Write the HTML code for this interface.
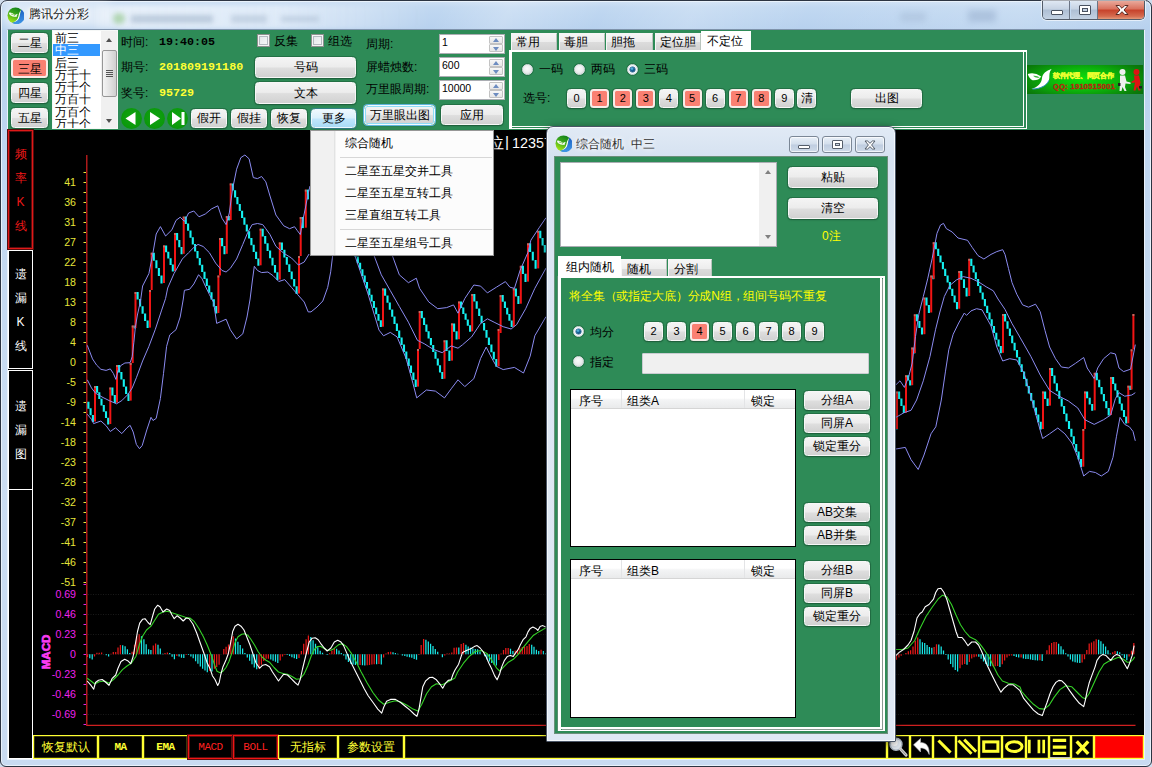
<!DOCTYPE html>
<html lang="zh"><head><meta charset="utf-8"><title>腾讯分分彩</title><style>
*{box-sizing:border-box;margin:0;padding:0}
html,body{width:1152px;height:767px;overflow:hidden;background:#cfdcec}
body{font-family:"Liberation Sans",sans-serif;font-size:12px;color:#000;position:relative;line-height:1}
.abs,.b,.t,.g{position:absolute}
.t{white-space:nowrap;font-size:12px;line-height:14px}
.b{border:1px solid #f7f7f7;border-radius:3.5px;background:linear-gradient(#f4f4f4 0%,#ececec 47%,#dedede 53%,#d1d1d1 100%);box-shadow:0 0 0 1px rgba(20,75,45,.4),0 1px 2px rgba(0,0,0,.25);text-align:center;font-size:12px;white-space:nowrap;overflow:hidden}
.b.red{background:#fa8072;border:2px solid #f8ece8;color:#000}
.b.hot{border-color:#eef8fe;background:linear-gradient(#eef8fe 0%,#daf0fc 47%,#c0e6fc 53%,#a9dbf6 100%);box-shadow:0 0 0 1px rgba(60,127,177,.55),0 1px 2px rgba(0,0,0,.25)}
.b.def{border-color:#f0fbff;box-shadow:inset 0 0 0 1px #8fdcf6,0 0 0 1px #5fb4dc,0 1px 2px rgba(0,0,0,.25)}
.nb{font-size:11px}
.sp{position:absolute;background:#fff;border:1px solid #abadb3;font-size:12px}
.sp i{position:absolute;right:1px;width:14px;height:8px;background:linear-gradient(#f8f8f8,#e6e6e6);border:1px solid #c3c3c3;border-radius:1px}
.sp i:after{content:"";position:absolute;left:3px;top:1px;border:3px solid transparent}
.sp i.u:after{border-bottom:4px solid #6d8cc0;border-top:0;top:1px}
.sp i.d:after{border-top:4px solid #6d8cc0;border-bottom:0;top:2px}
.cb{position:absolute;width:13px;height:13px;border:1px solid #8e8f8f;background:linear-gradient(135deg,#dfe3e6,#fafbfb);box-shadow:inset 0 0 0 1px #f4f4f4, inset 0 0 0 2px #b4b9bf}
.rd{position:absolute;width:11px;height:11px;border-radius:50%;border:1px solid #d9dcdf;background:radial-gradient(circle at 45% 40%,#fbfbfb 0%,#eceeef 50%,#c9cdd1 100%);box-shadow:0 0 0 1px rgba(20,75,45,.35)}
.rd.on{background:radial-gradient(circle at 50% 50%,#fff 0%,#f4f8fb 60%,#d8e4ec 100%)}
.rd.on:after{content:"";position:absolute;left:2px;top:2px;width:5px;height:5px;border-radius:50%;background:radial-gradient(circle at 40% 35%,#6fd4f4 0%,#16659c 40%,#0a3560 100%);box-shadow:0 0 0 .5px #1a5a8c}
.tab{position:absolute;border:1px solid #f6f6f6;border-right-color:#b9c4bd;border-bottom:none;background:linear-gradient(#f6f6f6 0%,#ededed 50%,#dcdcdc 52%,#d2d2d2 100%);font-size:12px;padding-left:5px;white-space:nowrap}
.tab.sel{background:#fff;border-color:#fff}
.y{color:#ffff00}
.wbtn{position:absolute;border:1px solid #fff;color:#fff;text-align:center;font-size:12px}
.ybtn{position:absolute;border:1px solid #ffff33;color:#ffff33;text-align:center;font-size:12px;line-height:22px;height:24px;top:735px;white-space:nowrap;box-shadow:inset 0 0 0 .5px rgba(255,255,51,.45)}
.ybtn.r{border-color:#f01414;color:#ff2020;box-shadow:0 0 0 1px #5a0c0c,inset 0 0 0 1px #5a0c0c;font-weight:normal}
.mono{font-family:"Liberation Mono",monospace;font-weight:bold;font-size:11px;letter-spacing:-.5px}
</style></head><body>
<div class="abs" style="left:0;top:0;width:1152px;height:767px;border-radius:7px 7px 6px 6px;background:linear-gradient(180deg,#cfe0f4 0px,#c1d8f1 6px,#b7d1ee 29px,#bfd6f0 140px,#cbddf2 450px,#c9dbf1 767px);border:1px solid #2c3442;box-shadow:inset 0 0 0 1px #e9f2fb"></div>
<div class="abs" style="left:2px;top:2px;width:1148px;height:27px;background:linear-gradient(115deg,rgba(255,255,255,0) 0%,rgba(255,255,255,0) 38%,rgba(255,255,255,.22) 44%,rgba(255,255,255,0) 52%,rgba(255,255,255,.18) 60%,rgba(255,255,255,0) 70%,rgba(255,255,255,.15) 88%,rgba(255,255,255,0) 100%)"></div>
<div class="abs" style="left:3px;top:3px;width:110px;height:25px;border-radius:10px;background:rgba(255,255,255,.55);filter:blur(5px)"></div>
<div class="abs" style="left:92px;top:5px;width:340px;height:24px;background:linear-gradient(90deg,rgba(255,255,255,0),rgba(255,255,255,.62) 8%,rgba(250,252,255,.55) 55%,rgba(255,255,255,.25) 80%,rgba(255,255,255,0));filter:blur(2px)"></div>
<div class="abs" style="left:113px;top:13px;width:12px;height:11px;border-radius:6px;background:#9ccc96;filter:blur(2.5px);opacity:.7"></div>
<div class="abs" style="left:131px;top:15px;width:82px;height:8px;background:#a3b6cc;filter:blur(2.5px);opacity:.6"></div>
<div class="abs" style="left:231px;top:15px;width:36px;height:8px;background:#a9bbd0;filter:blur(2.5px);opacity:.5"></div>
<div class="abs" style="left:281px;top:16px;width:38px;height:6px;background:#a9bbd0;filter:blur(2.5px);opacity:.5"></div>
<div class="abs" style="left:900px;top:12px;width:26px;height:10px;background:#9fb4cf;filter:blur(3px);opacity:.4"></div>
<div class="abs" style="left:968px;top:10px;width:28px;height:12px;background:#8fa6c6;filter:blur(3px);opacity:.45"></div>
<svg class="abs" style="left:7px;top:6.5px" width="17" height="17" viewBox="0 0 17 17"><defs><linearGradient id="ig" x1=".7" y1="0" x2=".2" y2="1"><stop offset="0" stop-color="#0f7f1a"/><stop offset=".45" stop-color="#3eaa1c"/><stop offset="1" stop-color="#b4ee16"/></linearGradient><linearGradient id="ib" x1="0" y1="0" x2="0" y2="1"><stop offset="0" stop-color="#1a5fc4"/><stop offset="1" stop-color="#3f98e6"/></linearGradient></defs><circle cx="8.5" cy="8.5" r="8" fill="url(#ig)"/><path d="M14.4 2.6 A8 8 0 0 1 5 15.7 C9.5 15 12 12 12.8 8.5 C13.2 6.5 13.5 4.5 14.4 2.6Z" fill="url(#ib)"/><path d="M14.2 2.9 C12.5 4.5 11.8 7 11.5 9 C11 12 9.5 13.8 6.5 15 C9.8 14.6 12 12.6 12.7 9 C13.1 6.8 13.3 4.8 14.2 2.9Z" fill="#fff"/><path d="M1.8 5.7 Q5 4.8 8 8 Q9.2 7 10.8 6.8 Q9.8 8.2 9.5 10 Q5.5 10.2 3.2 8.3 Q2.2 7.2 1.8 5.7Z" fill="#fff" opacity=".95"/><path d="M4 7 Q6.5 7.2 8.3 9.2" stroke="#6cc43a" stroke-width=".7" fill="none"/></svg>
<div class="t" style="left:29px;top:7px;font-size:12px;color:#1a1a1a;text-shadow:0 0 5px #fff,0 0 5px #fff,0 0 8px #fff">腾讯分分彩</div>
<div class="abs" style="left:1042px;top:1px;width:103px;height:19px;border:1px solid #535c69;border-top:none;border-radius:0 0 5px 5px;overflow:hidden;box-shadow:0 0 0 1px rgba(255,255,255,.6)">
<div class="abs" style="left:0;top:0;width:27px;height:18px;background:linear-gradient(#dfe8f3 0%,#c6d3e3 45%,#aebfd4 50%,#c4d2e3 100%);border-right:1px solid #6b7585"></div>
<div class="abs" style="left:28px;top:0;width:27px;height:18px;background:linear-gradient(#dfe8f3 0%,#c6d3e3 45%,#aebfd4 50%,#c4d2e3 100%);border-right:1px solid #6b7585"></div>
<div class="abs" style="left:55px;top:0;width:47px;height:18px;background:linear-gradient(#e9a99b 0%,#d9705c 45%,#c6412a 50%,#d56b4f 85%,#e39a7a 100%)"></div>
<div class="abs" style="left:8px;top:9px;width:12px;height:5px;border:1px solid #4a5260;background:#fff;border-radius:1px"></div>
<div class="abs" style="left:36px;top:4px;width:12px;height:10px;border:1px solid #4a5260;background:#fff;border-radius:1px"></div>
<div class="abs" style="left:39px;top:7px;width:6px;height:4px;border:1px solid #4a5260;background:#c3d0e1"></div>
<svg class="abs" style="left:71px;top:3px" width="16" height="12" viewBox="0 0 16 12"><path d="M2 1.5h3.2L8 4.3 10.8 1.5H14L10 6l4 4.5h-3.2L8 7.7 5.2 10.5H2L6 6z" fill="#fff" stroke="#5a2a22" stroke-width="1"/></svg>
</div>
<div class="abs" style="left:7px;top:29px;width:1138px;height:731px;background:#000;border:1px solid #eaf2fb;border-top-color:#7f93ab"></div>
<div class="abs" style="left:8px;top:30px;width:1136px;height:100px;background:#2e8b57"></div>
<div class="b " style="left:11px;top:33px;width:37px;height:20px;line-height:18px">二星</div>
<div class="b red" style="left:11px;top:58px;width:37px;height:20px;line-height:18px">三星</div>
<div class="b " style="left:11px;top:83px;width:37px;height:20px;line-height:18px">四星</div>
<div class="b " style="left:11px;top:108px;width:37px;height:20px;line-height:18px">五星</div>
<div class="abs" style="left:52px;top:30px;width:66px;height:99px;background:#fff;border:1px solid #f6f8f7;overflow:hidden;font-size:12px;line-height:12.3px"><div style="position:absolute;left:0;top:13px;width:47px;height:12px;background:#3399ff"></div><div style="position:absolute;left:2px;top:1px;white-space:nowrap">前三<br><span style="color:#fff">中三</span><br>后三<br>万千十<br>万千个<br>万百十<br>万百个<br>万十个</div><div style="position:absolute;left:48px;top:0;width:17px;height:97px;background:#f0f0f0"></div><div style="position:absolute;left:49px;top:19px;width:15px;height:47px;border:1px solid #979797;border-radius:2px;background:linear-gradient(90deg,#f5f5f5,#e3e3e3 50%,#cfcfcf)"></div><div style="position:absolute;left:53px;top:39px;width:7px;height:1px;background:#555;box-shadow:0 2px 0 #555,0 4px 0 #555,0 6px 0 #555"></div><div style="position:absolute;left:53px;top:7px;border:3.5px solid transparent;border-bottom:4px solid #505050;border-top:0"></div><div style="position:absolute;left:53px;top:88px;border:3.5px solid transparent;border-top:4px solid #505050;border-bottom:0"></div></div>
<div class="t" style="left:121px;top:35px;">时间:</div>
<div class="t" style="left:121px;top:60px;">期号:</div>
<div class="t" style="left:121px;top:86px;">奖号:</div>
<div class="t" style="left:159px;top:35px;font-family:'Liberation Mono',monospace;font-weight:bold;font-size:11.7px">19:40:05</div>
<div class="t" style="left:159px;top:60px;font-family:'Liberation Mono',monospace;font-weight:bold;font-size:11.7px;color:#ffff33">201809191180</div>
<div class="t" style="left:159px;top:86px;font-family:'Liberation Mono',monospace;font-weight:bold;font-size:11.7px;color:#ffff33">95729</div>
<div class="cb" style="left:257px;top:34px"></div>
<div class="t" style="left:274px;top:34px;">反集</div>
<div class="cb" style="left:311px;top:34px"></div>
<div class="t" style="left:328px;top:34px;">组选</div>
<div class="b " style="left:255px;top:57px;width:101px;height:21px;line-height:19px">号码</div>
<div class="b " style="left:255px;top:82px;width:101px;height:22px;line-height:20px">文本</div>
<div class="abs" style="left:121px;top:108px;width:21px;height:21px;border-radius:50%;background:radial-gradient(circle at 50% 45%,#10a510,#0b980b 70%,#0a8a0a)"></div>
<div class="abs" style="left:144px;top:108px;width:21px;height:21px;border-radius:50%;background:radial-gradient(circle at 50% 45%,#10a510,#0b980b 70%,#0a8a0a)"></div>
<div class="abs" style="left:167px;top:108px;width:21px;height:21px;border-radius:50%;background:radial-gradient(circle at 50% 45%,#10a510,#0b980b 70%,#0a8a0a)"></div>
<svg class="abs" style="left:121px;top:108px" width="70" height="21" viewBox="0 0 70 21"><path d="M14.5 4v13L4.5 10.5z" fill="#fff"/><path d="M29 4v13l10-6.5z" fill="#fff"/><path d="M51 4v13l9-6.5zM60.5 4h3v13h-3z" fill="#fff"/></svg>
<div class="b " style="left:191px;top:109px;width:36px;height:19px;line-height:17px">假开</div>
<div class="b " style="left:231px;top:109px;width:36px;height:19px;line-height:17px">假挂</div>
<div class="b " style="left:271px;top:109px;width:36px;height:19px;line-height:17px">恢复</div>
<div class="b hot" style="left:311px;top:109px;width:45px;height:19px;line-height:17px">更多</div>
<div class="t" style="left:366px;top:37px;">周期:</div>
<div class="t" style="left:366px;top:60px;">屏蜡烛数:</div>
<div class="t" style="left:366px;top:82px;">万里眼周期:</div>
<div class="sp" style="left:439px;top:34px;width:66px;height:20px;line-height:15px;padding-left:2px;font-size:10.5px">1<i class="u" style="top:1px"></i><i class="d" style="top:9px"></i></div>
<div class="sp" style="left:439px;top:57px;width:66px;height:20px;line-height:15px;padding-left:2px;font-size:10.5px">600<i class="u" style="top:1px"></i><i class="d" style="top:9px"></i></div>
<div class="sp" style="left:439px;top:80px;width:66px;height:20px;line-height:15px;padding-left:2px;font-size:10.5px">10000<i class="u" style="top:1px"></i><i class="d" style="top:9px"></i></div>
<div class="b def" style="left:364px;top:105px;width:71px;height:20px;line-height:18px">万里眼出图</div>
<div class="b " style="left:441px;top:105px;width:62px;height:20px;line-height:18px">应用</div>
<div class="tab" style="left:511px;top:33px;width:46px;height:17px;line-height:17px;padding-left:4px">常用</div>
<div class="tab" style="left:559px;top:33px;width:46px;height:17px;line-height:17px;padding-left:4px">毒胆</div>
<div class="tab" style="left:606px;top:33px;width:47px;height:17px;line-height:17px;padding-left:4px">胆拖</div>
<div class="tab" style="left:655px;top:33px;width:46px;height:17px;line-height:17px;padding-left:4px">定位胆</div>
<div class="tab sel" style="left:701px;top:31px;width:50px;height:20px;line-height:19px">不定位</div>
<div class="abs" style="left:509px;top:50px;width:518px;height:79px;border:2px solid #fff;border-left-width:3px;border-right:1px solid #fff;border-bottom:1px solid #fff"></div>
<div class="abs" style="left:512px;top:51px;width:512px;height:76px;border-right:1px solid #fff;border-bottom:1px solid #fff"></div>
<div class="rd" style="left:522px;top:64px"></div>
<div class="t" style="left:539px;top:62px">一码</div>
<div class="rd" style="left:574px;top:64px"></div>
<div class="t" style="left:591px;top:62px">两码</div>
<div class="rd on" style="left:627px;top:64px"></div>
<div class="t" style="left:644px;top:62px">三码</div>
<div class="t" style="left:523px;top:91px">选号:</div>
<div class="b nb" style="left:567px;top:89px;width:19px;height:19px;line-height:17px">0</div>
<div class="b nb red" style="left:590.1px;top:89px;width:19px;height:19px;line-height:15px">1</div>
<div class="b nb red" style="left:613.2px;top:89px;width:19px;height:19px;line-height:15px">2</div>
<div class="b nb red" style="left:636.3px;top:89px;width:19px;height:19px;line-height:15px">3</div>
<div class="b nb" style="left:659.4px;top:89px;width:19px;height:19px;line-height:17px">4</div>
<div class="b nb red" style="left:682.5px;top:89px;width:19px;height:19px;line-height:15px">5</div>
<div class="b nb" style="left:705.6px;top:89px;width:19px;height:19px;line-height:17px">6</div>
<div class="b nb red" style="left:728.7px;top:89px;width:19px;height:19px;line-height:15px">7</div>
<div class="b nb red" style="left:751.8px;top:89px;width:19px;height:19px;line-height:15px">8</div>
<div class="b nb" style="left:774.9px;top:89px;width:19px;height:19px;line-height:17px">9</div>
<div class="b" style="left:797px;top:89px;width:19px;height:19px;line-height:17px">清</div>
<div class="b" style="left:851px;top:89px;width:71px;height:19px;line-height:17px">出图</div>
<div class="abs" style="left:1027px;top:65px;width:116px;height:29px;overflow:hidden;background:radial-gradient(ellipse 70% 90% at 48% 50%,#0be20b 0%,#0cb80c 40%,#0a7d0a 80%,#0a690a 100%)">
<svg class="abs" style="left:0;top:0" width="116" height="29" viewBox="0 0 116 29">
<path d="M.800 9 Q7 6.5 14.2 11.5 Q11.5 15.8 5.5 15.3 Q2 13.5 .800 9Z" fill="#fff"/><path d="M6 10.8 Q10 10.3 12.8 12.4 Q9 13.8 6 10.8Z" fill="#35b535"/>
<path d="M24.6 4 C22 7 22.5 10 22.3 13 C22 19 15 24 4.3 24 C11 22 14.5 18.5 15 13 C15.5 9 19 5.5 24.6 4Z" fill="#fff"/><path d="M21.8 15.5 C20 20.5 13.5 23.8 5.5 24.1" stroke="#2f8fc4" stroke-width="1" fill="none"/>
<g fill="#f0f0f0"><circle cx="95.5" cy="7" r="3"/><path d="M93 10.5h5l1.5 6 4 1v1.5l-5-.5-.5 3.5 1.5 4h-2l-2-4-1 4h-2l.5-8z"/></g><rect x="91" y="18" width="2.5" height="3" fill="#222"/>
<g fill="#e01212"><circle cx="109.5" cy="7" r="3"/><path d="M107 10.5h5l1.5 7-1 4 1 4h-2l-1.5-4-1.5 4h-2l1.5-8-3.5.500v-1.5l3-1.5z"/></g><rect x="112" y="21" width="3" height="2.5" fill="#222"/>
</svg>
<div class="t" style="left:26px;top:6px;font-size:7.4px;line-height:9px;font-weight:bold;color:#eaff30;letter-spacing:-.3px;-webkit-text-stroke:.35px #eaff30">软件代理、网页合作</div>
<div class="t" style="left:26px;top:17px;font-size:7.6px;line-height:9px;font-weight:bold;color:#b8260e;letter-spacing:.25px;-webkit-text-stroke:.3px #b8260e">QQ: 1910515001</div>
</div>
<svg class="abs" style="left:0;top:0;font-family:'Liberation Sans',sans-serif" width="1152" height="767" viewBox="0 0 1152 767"><path d="M86.8 155V725.3H1135.5" stroke="#cf2020" stroke-width="1.25" fill="none"/>
<path d="M88 594.5H1135" stroke="#3a3a3a" stroke-width="1" stroke-dasharray="1 1.5" opacity=".45"/>
<path d="M88 614.5H1135" stroke="#3a3a3a" stroke-width="1" stroke-dasharray="1 1.5" opacity=".45"/>
<path d="M88 634.5H1135" stroke="#3a3a3a" stroke-width="1" stroke-dasharray="1 1.5" opacity=".45"/>
<path d="M88 654.5H1135" stroke="#3a3a3a" stroke-width="1" stroke-dasharray="1 1.5" opacity=".45"/>
<path d="M88 674.5H1135" stroke="#3a3a3a" stroke-width="1" stroke-dasharray="1 1.5" opacity=".45"/>
<path d="M88 694.5H1135" stroke="#3a3a3a" stroke-width="1" stroke-dasharray="1 1.5" opacity=".45"/>
<path d="M88 714.5H1135" stroke="#3a3a3a" stroke-width="1" stroke-dasharray="1 1.5" opacity=".45"/>
<path d="M83.5 172.5h2.5M83.5 182.5h2.5M83.5 192.5h2.5M83.5 202.5h2.5M83.5 212.5h2.5M83.5 222.5h2.5M83.5 232.5h2.5M83.5 242.5h2.5M83.5 252.5h2.5M83.5 262.5h2.5M83.5 272.5h2.5M83.5 282.5h2.5M83.5 292.5h2.5M83.5 302.5h2.5M83.5 312.5h2.5M83.5 322.5h2.5M83.5 332.5h2.5M83.5 342.5h2.5M83.5 352.5h2.5M83.5 362.5h2.5M83.5 372.5h2.5M83.5 382.5h2.5M83.5 392.5h2.5M83.5 402.5h2.5M83.5 412.5h2.5M83.5 422.5h2.5M83.5 432.5h2.5M83.5 442.5h2.5M83.5 452.5h2.5M83.5 462.5h2.5M83.5 472.5h2.5M83.5 482.5h2.5M83.5 492.5h2.5M83.5 502.5h2.5M83.5 512.5h2.5M83.5 522.5h2.5M83.5 532.5h2.5M83.5 542.5h2.5M83.5 552.5h2.5M83.5 562.5h2.5M83.5 572.5h2.5M83.5 582.5h2.5" stroke="#e6e63a" stroke-width="1.2"/>
<path d="M83.5 584.5h2.5M83.5 594.5h2.5M83.5 604.5h2.5M83.5 614.5h2.5M83.5 624.5h2.5M83.5 634.5h2.5M83.5 644.5h2.5M83.5 654.5h2.5M83.5 664.5h2.5M83.5 674.5h2.5M83.5 684.5h2.5M83.5 694.5h2.5M83.5 704.5h2.5M83.5 714.5h2.5M83.5 724.5h2.5" stroke="#e020e0" stroke-width="1.2"/>
<text x="76" y="186" text-anchor="end" fill="#e6e63a" font-size="10.6">41</text>
<text x="76" y="206" text-anchor="end" fill="#e6e63a" font-size="10.6">36</text>
<text x="76" y="226" text-anchor="end" fill="#e6e63a" font-size="10.6">31</text>
<text x="76" y="246" text-anchor="end" fill="#e6e63a" font-size="10.6">27</text>
<text x="76" y="266" text-anchor="end" fill="#e6e63a" font-size="10.6">22</text>
<text x="76" y="286" text-anchor="end" fill="#e6e63a" font-size="10.6">18</text>
<text x="76" y="306" text-anchor="end" fill="#e6e63a" font-size="10.6">13</text>
<text x="76" y="326" text-anchor="end" fill="#e6e63a" font-size="10.6">8</text>
<text x="76" y="346" text-anchor="end" fill="#e6e63a" font-size="10.6">4</text>
<text x="76" y="366" text-anchor="end" fill="#e6e63a" font-size="10.6">0</text>
<text x="76" y="386" text-anchor="end" fill="#e6e63a" font-size="10.6">-5</text>
<text x="76" y="406" text-anchor="end" fill="#e6e63a" font-size="10.6">-9</text>
<text x="76" y="426" text-anchor="end" fill="#e6e63a" font-size="10.6">-14</text>
<text x="76" y="446" text-anchor="end" fill="#e6e63a" font-size="10.6">-18</text>
<text x="76" y="466" text-anchor="end" fill="#e6e63a" font-size="10.6">-23</text>
<text x="76" y="486" text-anchor="end" fill="#e6e63a" font-size="10.6">-28</text>
<text x="76" y="506" text-anchor="end" fill="#e6e63a" font-size="10.6">-32</text>
<text x="76" y="526" text-anchor="end" fill="#e6e63a" font-size="10.6">-37</text>
<text x="76" y="546" text-anchor="end" fill="#e6e63a" font-size="10.6">-41</text>
<text x="76" y="566" text-anchor="end" fill="#e6e63a" font-size="10.6">-46</text>
<text x="76" y="586" text-anchor="end" fill="#e6e63a" font-size="10.6">-51</text>
<text x="76" y="598" text-anchor="end" fill="#ee22ee" font-size="10.6">0.69</text>
<text x="76" y="618" text-anchor="end" fill="#ee22ee" font-size="10.6">0.46</text>
<text x="76" y="638" text-anchor="end" fill="#ee22ee" font-size="10.6">0.23</text>
<text x="76" y="658" text-anchor="end" fill="#ee22ee" font-size="10.6">0</text>
<text x="76" y="678" text-anchor="end" fill="#ee22ee" font-size="10.6">-0.23</text>
<text x="76" y="698" text-anchor="end" fill="#ee22ee" font-size="10.6">-0.46</text>
<text x="76" y="718" text-anchor="end" fill="#ee22ee" font-size="10.6">-0.69</text>
<text transform="translate(50,652) rotate(-90)" text-anchor="middle" fill="#fb3cf2" stroke="#fb3cf2" stroke-width=".7" font-size="11.5" font-weight="bold">MACD</text>
<text x="488" y="147.5" fill="#fff" font-size="16">位</text><text x="505" y="147" fill="#fff" font-size="15.5">|</text><text x="512" y="148" fill="#fff" font-size="15.5" textLength="40" lengthAdjust="spacingAndGlyphs">12357</text>
<path d="M88.4 401.7v7M90.6 408.3v7M92.9 414.9v7" stroke="#14f2f2" stroke-width="2.1" fill="none"/>
<rect x="94" y="386" width="2" height="35.5" fill="#f21414"/>
<rect x="94" y="386" width="2" height="2" fill="#b08a80" opacity=".7"/>
<path d="M97.1 386v6.7M99.3 392.3v6.7M101.5 398.7v6.7M103.8 405v6.7M106 411.3v6.7M108.2 417.7v6.7" stroke="#14f2f2" stroke-width="2.1" fill="none"/>
<rect x="109.3" y="387.5" width="2" height="36.5" fill="#f21414"/>
<rect x="109.3" y="387.5" width="2" height="2" fill="#b08a80" opacity=".7"/>
<path d="M112.4 387.5v8M114.8 395.1v8" stroke="#14f2f2" stroke-width="2.1" fill="none"/>
<rect x="116" y="365" width="2" height="37.7" fill="#f21414"/>
<rect x="116" y="365" width="2" height="2" fill="#b08a80" opacity=".7"/>
<path d="M119.1 365v7.5M121.4 372.1v7.5M123.8 379.2v7.5M126.1 386.4v7.5M128.5 393.5v7.5" stroke="#14f2f2" stroke-width="2.1" fill="none"/>
<rect x="129.7" y="363" width="2" height="37.6" fill="#f21414"/>
<rect x="129.7" y="363" width="2" height="2" fill="#b08a80" opacity=".7"/>
<rect x="131.7" y="325.5" width="2" height="37.5" fill="#f21414"/>
<rect x="131.7" y="325.5" width="2" height="2" fill="#b08a80" opacity=".7"/>
<path d="M134.8 325.5v2.9" stroke="#14f2f2" stroke-width="2.1" fill="none"/>
<rect x="134.5" y="292" width="2" height="36" fill="#f21414"/>
<rect x="134.5" y="292" width="2" height="2" fill="#b08a80" opacity=".7"/>
<path d="M137.6 292v7.5M140.1 299.1v7.5M142.6 306.2v7.5M145.1 313.4v7.5M147.6 320.5v7.5" stroke="#14f2f2" stroke-width="2.1" fill="none"/>
<rect x="149" y="290" width="2" height="37.6" fill="#f21414"/>
<rect x="149" y="290" width="2" height="2" fill="#b08a80" opacity=".7"/>
<rect x="150.7" y="252.7" width="2" height="37.3" fill="#f21414"/>
<rect x="150.7" y="252.7" width="2" height="2" fill="#b08a80" opacity=".7"/>
<path d="M153.8 252.7v8M156.4 260.3v8M158.9 267.9v8M161.5 275.4v8" stroke="#14f2f2" stroke-width="2.1" fill="none"/>
<rect x="163" y="245.4" width="2" height="37.6" fill="#f21414"/>
<rect x="163" y="245.4" width="2" height="2" fill="#b08a80" opacity=".7"/>
<path d="M166.1 245.4v6.8M168.3 251.8v6.8M170.6 258.2v6.8M172.8 264.6v6.8" stroke="#14f2f2" stroke-width="2.1" fill="none"/>
<rect x="174" y="233" width="2" height="38" fill="#f21414"/>
<rect x="174" y="233" width="2" height="2" fill="#b08a80" opacity=".7"/>
<path d="M177.1 233v7.3M179.3 239.9v7.3M181.6 246.9v7.3" stroke="#14f2f2" stroke-width="2.1" fill="none"/>
<rect x="182.7" y="216.6" width="2" height="37.2" fill="#f21414"/>
<rect x="182.7" y="216.6" width="2" height="2" fill="#b08a80" opacity=".7"/>
<path d="M185.8 216.6v7.3M188.1 223.5v7.3M190.5 230.4v7.3M192.8 237.3v7.3M195.1 244.1v7.3M197.5 251v7.3M199.8 257.9v7.3M202.2 264.8v7.3M204.5 271.7v7.3M206.8 278.6v7.3M209.2 285.5v7.3M211.5 292.3v7.3M213.8 299.2v7.3M216.2 306.1v7.3" stroke="#14f2f2" stroke-width="2.1" fill="none"/>
<rect x="217.4" y="275.5" width="2" height="37.5" fill="#f21414"/>
<rect x="217.4" y="275.5" width="2" height="2" fill="#b08a80" opacity=".7"/>
<rect x="219" y="238" width="2" height="37.5" fill="#f21414"/>
<rect x="219" y="238" width="2" height="2" fill="#b08a80" opacity=".7"/>
<path d="M222.1 238v8.3M224.5 245.9v8.3" stroke="#14f2f2" stroke-width="2.1" fill="none"/>
<rect x="225.8" y="216" width="2" height="37.8" fill="#f21414"/>
<rect x="225.8" y="216" width="2" height="2" fill="#b08a80" opacity=".7"/>
<path d="M228.9 216v4.4" stroke="#14f2f2" stroke-width="2.1" fill="none"/>
<rect x="229.7" y="183.4" width="2" height="36.6" fill="#f21414"/>
<rect x="229.7" y="183.4" width="2" height="2" fill="#b08a80" opacity=".7"/>
<path d="M232.8 183.4v7.2M235.1 190.2v7.2M237.4 197.1v7.2M239.8 203.9v7.2M242.1 210.7v7.2M244.4 217.5v7.2M246.8 224.4v7.2M249.1 231.2v7.2M251.4 238v7.2M253.7 244.8v7.2M256.1 251.7v7.2M258.4 258.5v7.2" stroke="#14f2f2" stroke-width="2.1" fill="none"/>
<rect x="259.6" y="228.7" width="2" height="36.6" fill="#f21414"/>
<rect x="259.6" y="228.7" width="2" height="2" fill="#b08a80" opacity=".7"/>
<path d="M262.7 228.7v7.7M265.2 236v7.7M267.6 243.2v7.7M270.1 250.5v7.7M272.5 257.7v7.7M275 265v7.7M277.4 272.2v7.7" stroke="#14f2f2" stroke-width="2.1" fill="none"/>
<rect x="278.8" y="242.4" width="2" height="37.1" fill="#f21414"/>
<rect x="278.8" y="242.4" width="2" height="2" fill="#b08a80" opacity=".7"/>
<path d="M281.9 242.4v7.7M284.4 249.7v7.7M286.8 257v7.7M289.3 264.3v7.7M291.7 271.6v7.7M294.2 278.9v7.7M296.6 286.2v7.7" stroke="#14f2f2" stroke-width="2.1" fill="none"/>
<rect x="298" y="256" width="2" height="37.5" fill="#f21414"/>
<rect x="298" y="256" width="2" height="2" fill="#b08a80" opacity=".7"/>
<rect x="299.7" y="217" width="2" height="39" fill="#f21414"/>
<rect x="299.7" y="217" width="2" height="2" fill="#b08a80" opacity=".7"/>
<path d="M302.8 217v11.1" stroke="#14f2f2" stroke-width="2.1" fill="none"/>
<rect x="304.8" y="189.6" width="2" height="38.1" fill="#f21414"/>
<rect x="304.8" y="189.6" width="2" height="2" fill="#b08a80" opacity=".7"/>
<path d="M307.9 189.6v9.8" stroke="#14f2f2" stroke-width="2.1" fill="none"/>
<path d="M355.5 250v6.8M357.8 256.4v6.8M360.1 262.8v6.8M362.4 269.2v6.8M364.7 275.6v6.8M367 282v6.8M369.3 288.4v6.8M371.6 294.7v6.8M373.9 301.1v6.8M376.2 307.5v6.8M378.5 313.9v6.8M380.8 320.3v6.8" stroke="#14f2f2" stroke-width="2.1" fill="none"/>
<rect x="382" y="288.4" width="2" height="38.3" fill="#f21414"/>
<rect x="382" y="288.4" width="2" height="2" fill="#b08a80" opacity=".7"/>
<path d="M385.1 288.4v7.4M387.5 295.4v7.4M389.8 302.4v7.4M392.2 309.4v7.4M394.5 316.5v7.4M396.9 323.5v7.4M399.2 330.5v7.4M401.6 337.5v7.4M404 344.5v7.4M406.3 351.5v7.4M408.7 358.5v7.4M411 365.6v7.4M413.4 372.6v7.4M415.7 379.6v7.4" stroke="#14f2f2" stroke-width="2.1" fill="none"/>
<rect x="417" y="349" width="2" height="37.6" fill="#f21414"/>
<rect x="417" y="349" width="2" height="2" fill="#b08a80" opacity=".7"/>
<rect x="418.7" y="311" width="2" height="38" fill="#f21414"/>
<rect x="418.7" y="311" width="2" height="2" fill="#b08a80" opacity=".7"/>
<path d="M421.8 311v7.2M424.1 317.8v7.2M426.4 324.5v7.2M428.6 331.3v7.2M430.9 338.1v7.2M433.2 344.9v7.2M435.5 351.6v7.2M437.8 358.4v7.2M440 365.2v7.2M442.3 371.9v7.2" stroke="#14f2f2" stroke-width="2.1" fill="none"/>
<rect x="443.5" y="340.3" width="2" height="38.4" fill="#f21414"/>
<rect x="443.5" y="340.3" width="2" height="2" fill="#b08a80" opacity=".7"/>
<path d="M446.6 340.3v10.6M449.4 350.5v10.6" stroke="#14f2f2" stroke-width="2.1" fill="none"/>
<rect x="451" y="323.4" width="2" height="37.2" fill="#f21414"/>
<rect x="451" y="323.4" width="2" height="2" fill="#b08a80" opacity=".7"/>
<path d="M454.1 323.4v8.3M456.6 331.3v8.3" stroke="#14f2f2" stroke-width="2.1" fill="none"/>
<rect x="458" y="301.5" width="2" height="37.7" fill="#f21414"/>
<rect x="458" y="301.5" width="2" height="2" fill="#b08a80" opacity=".7"/>
<path d="M461.1 301.5v6.4M463.3 307.5v6.4M465.6 313.4v6.4M467.8 319.4v6.4M470.1 325.3v6.4" stroke="#14f2f2" stroke-width="2.1" fill="none"/>
<rect x="471.2" y="294" width="2" height="37.3" fill="#f21414"/>
<rect x="471.2" y="294" width="2" height="2" fill="#b08a80" opacity=".7"/>
<path d="M474.3 294v7.6M476.7 301.2v7.6M479.2 308.5v7.6M481.6 315.7v7.6M484.1 322.9v7.6M486.5 330.1v7.6M488.9 337.4v7.6M491.4 344.6v7.6M493.8 351.8v7.6M496.3 359.1v7.6" stroke="#14f2f2" stroke-width="2.1" fill="none"/>
<rect x="497.6" y="329" width="2" height="37.3" fill="#f21414"/>
<rect x="497.6" y="329" width="2" height="2" fill="#b08a80" opacity=".7"/>
<rect x="499.6" y="295.1" width="2" height="37.9" fill="#f21414"/>
<rect x="499.6" y="295.1" width="2" height="2" fill="#b08a80" opacity=".7"/>
<path d="M502.7 295.1v6.7M504.9 301.4v6.7M507.2 307.7v6.7M509.4 314.1v6.7M511.7 320.4v6.7" stroke="#14f2f2" stroke-width="2.1" fill="none"/>
<rect x="512.8" y="288.4" width="2" height="38.3" fill="#f21414"/>
<rect x="512.8" y="288.4" width="2" height="2" fill="#b08a80" opacity=".7"/>
<path d="M515.9 288.4v8.1M518.4 296v8.1" stroke="#14f2f2" stroke-width="2.1" fill="none"/>
<rect x="519.8" y="265.8" width="2" height="37.9" fill="#f21414"/>
<rect x="519.8" y="265.8" width="2" height="2" fill="#b08a80" opacity=".7"/>
<path d="M522.9 265.8v8.3M525.5 273.7v8.3" stroke="#14f2f2" stroke-width="2.1" fill="none"/>
<rect x="527" y="243.3" width="2" height="38.3" fill="#f21414"/>
<rect x="527" y="243.3" width="2" height="2" fill="#b08a80" opacity=".7"/>
<path d="M530.1 243.3v8.8M532.8 251.7v8.8M535.6 260v8.8" stroke="#14f2f2" stroke-width="2.1" fill="none"/>
<rect x="537.2" y="230.8" width="2" height="37.6" fill="#f21414"/>
<rect x="537.2" y="230.8" width="2" height="2" fill="#b08a80" opacity=".7"/>
<path d="M540.3 230.8v7.5M542.6 237.9v7.5M544.8 244.9v7.5" stroke="#14f2f2" stroke-width="2.1" fill="none"/>
<path d="M896.6 424v5.4" stroke="#14f2f2" stroke-width="2.1" fill="none"/>
<rect x="896" y="391.5" width="2" height="37.5" fill="#f21414"/>
<rect x="896" y="391.5" width="2" height="2" fill="#b08a80" opacity=".7"/>
<path d="M899.1 391.5v7.5M901.4 398.6v7.5M903.8 405.6v7.5" stroke="#14f2f2" stroke-width="2.1" fill="none"/>
<rect x="905" y="375.2" width="2" height="37.5" fill="#f21414"/>
<rect x="905" y="375.2" width="2" height="2" fill="#b08a80" opacity=".7"/>
<path d="M908.1 375.2v5.4M910.2 380.2v5.4" stroke="#14f2f2" stroke-width="2.1" fill="none"/>
<rect x="911.2" y="347.5" width="2" height="37.7" fill="#f21414"/>
<rect x="911.2" y="347.5" width="2" height="2" fill="#b08a80" opacity=".7"/>
<path d="M914.3 347.5v5.9" stroke="#14f2f2" stroke-width="2.1" fill="none"/>
<rect x="913.8" y="314.3" width="2" height="38.7" fill="#f21414"/>
<rect x="913.8" y="314.3" width="2" height="2" fill="#b08a80" opacity=".7"/>
<path d="M916.9 314.3v7M919.4 320.9v7M922 327.6v7" stroke="#14f2f2" stroke-width="2.1" fill="none"/>
<rect x="923.4" y="297.6" width="2" height="36.6" fill="#f21414"/>
<rect x="923.4" y="297.6" width="2" height="2" fill="#b08a80" opacity=".7"/>
<path d="M926.5 297.6v7.8M928.9 305.1v7.8" stroke="#14f2f2" stroke-width="2.1" fill="none"/>
<rect x="930.2" y="275.5" width="2" height="37" fill="#f21414"/>
<rect x="930.2" y="275.5" width="2" height="2" fill="#b08a80" opacity=".7"/>
<path d="M933.3 275.5v3.7" stroke="#14f2f2" stroke-width="2.1" fill="none"/>
<rect x="932.7" y="242.2" width="2" height="36.6" fill="#f21414"/>
<rect x="932.7" y="242.2" width="2" height="2" fill="#b08a80" opacity=".7"/>
<path d="M935.8 242.2v7.1M938.2 248.8v7.1M940.5 255.5v7.1M942.9 262.1v7.1M945.2 268.8v7.1M947.6 275.4v7.1M949.9 282.1v7.1M952.3 288.8v7.1M954.6 295.4v7.1M957 302.1v7.1" stroke="#14f2f2" stroke-width="2.1" fill="none"/>
<rect x="958.2" y="271" width="2" height="37.7" fill="#f21414"/>
<rect x="958.2" y="271" width="2" height="2" fill="#b08a80" opacity=".7"/>
<path d="M961.3 271v8.7M964 279.3v8.7M966.6 287.7v8.7" stroke="#14f2f2" stroke-width="2.1" fill="none"/>
<rect x="968.2" y="258.8" width="2" height="37.2" fill="#f21414"/>
<rect x="968.2" y="258.8" width="2" height="2" fill="#b08a80" opacity=".7"/>
<path d="M971.3 258.8v7.1M973.6 265.5v7.1M975.8 272.2v7.1M978.1 278.9v7.1M980.4 285.7v7.1M982.7 292.4v7.1M984.9 299.1v7.1M987.2 305.8v7.1M989.5 312.5v7.1M991.7 319.2v7.1M994 325.9v7.1M996.3 332.7v7.1M998.6 339.4v7.1M1000.8 346.1v7.1" stroke="#14f2f2" stroke-width="2.1" fill="none"/>
<rect x="1002" y="314" width="2" height="38.8" fill="#f21414"/>
<rect x="1002" y="314" width="2" height="2" fill="#b08a80" opacity=".7"/>
<path d="M1005.1 314v7.6M1007.5 321.2v7.6M1009.9 328.4v7.6M1012.2 335.6v7.6M1014.6 342.8v7.6M1017 349.9v7.6M1019.4 357.1v7.6M1021.7 364.3v7.6M1024.1 371.5v7.6M1026.5 378.7v7.6M1028.8 385.9v7.6M1031.2 393.1v7.6M1033.6 400.2v7.6M1036 407.4v7.6M1038.3 414.6v7.6M1040.7 421.8v7.6" stroke="#14f2f2" stroke-width="2.1" fill="none"/>
<rect x="1042" y="391.5" width="2" height="37.5" fill="#f21414"/>
<rect x="1042" y="391.5" width="2" height="2" fill="#b08a80" opacity=".7"/>
<path d="M1045.1 391.5v7.5M1047.6 398.6v7.5" stroke="#14f2f2" stroke-width="2.1" fill="none"/>
<rect x="1049" y="368" width="2" height="37.6" fill="#f21414"/>
<rect x="1049" y="368" width="2" height="2" fill="#b08a80" opacity=".7"/>
<path d="M1052.1 368v8M1054.5 375.6v8M1056.9 383.2v8M1059.3 390.8v8M1061.7 398.4v8M1064.1 406v8M1066.5 413.6v8M1069 421.1v8M1071.4 428.7v8M1073.8 436.3v8M1076.2 443.9v8M1078.6 451.5v8M1081 459.1v8" stroke="#14f2f2" stroke-width="2.1" fill="none"/>
<rect x="1082.3" y="429" width="2" height="37.7" fill="#f21414"/>
<rect x="1082.3" y="429" width="2" height="2" fill="#b08a80" opacity=".7"/>
<rect x="1084" y="391.5" width="2" height="37.5" fill="#f21414"/>
<rect x="1084" y="391.5" width="2" height="2" fill="#b08a80" opacity=".7"/>
<path d="M1087.1 391.5v6.7M1089.7 397.8v6.7M1092.2 404v6.7" stroke="#14f2f2" stroke-width="2.1" fill="none"/>
<rect x="1093.7" y="372.8" width="2" height="37.5" fill="#f21414"/>
<rect x="1093.7" y="372.8" width="2" height="2" fill="#b08a80" opacity=".7"/>
<path d="M1096.8 372.8v7.4M1099.2 379.8v7.4M1101.6 386.9v7.4M1103.9 393.9v7.4M1106.3 400.9v7.4M1108.7 408v7.4" stroke="#14f2f2" stroke-width="2.1" fill="none"/>
<rect x="1110" y="377" width="2" height="38" fill="#f21414"/>
<rect x="1110" y="377" width="2" height="2" fill="#b08a80" opacity=".7"/>
<path d="M1113.1 377v7M1115.3 383.6v7M1117.5 390.2v7M1119.7 396.8v7M1121.8 403.4v7M1124 410v7M1126.2 416.6v7" stroke="#14f2f2" stroke-width="2.1" fill="none"/>
<rect x="1127.3" y="385.7" width="2" height="37.5" fill="#f21414"/>
<rect x="1127.3" y="385.7" width="2" height="2" fill="#b08a80" opacity=".7"/>
<path d="M1130.4 385.7v4.2" stroke="#14f2f2" stroke-width="2.1" fill="none"/>
<rect x="1130.6" y="349.3" width="2" height="40.2" fill="#f21414"/>
<rect x="1130.6" y="349.3" width="2" height="2" fill="#b08a80" opacity=".7"/>
<rect x="1132.4" y="314" width="2" height="35.3" fill="#f21414"/>
<rect x="1132.4" y="314" width="2" height="2" fill="#b08a80" opacity=".7"/>
<polyline points="87.3,345.3 92.5,358.9 96.7,365.2 100.9,369.3 106.1,370.4 110.3,368.9 113.4,373.5 115.9,379.4 118,370.4 120.7,365.6 124.9,363 130.1,362.7 132.2,356.8 133.9,342.2 135.3,327.6 137.4,315 140.5,301 142.6,286 148.9,273.6 153,252.7 156.2,234 160.4,226.6 165.6,236 171.9,229.8 176,220.4 180.2,217.2 184.4,221.4 188.6,213 193.8,211 199,216.8 205.3,214 211.5,208.9 217.8,205.8 222,218.3 226.1,224.6 229.3,213 232.4,190 236.6,169.2 240.8,157.7 244.9,155 249.1,158.8 253.3,177.6 257.5,178.6 261.6,176.5 265.8,181.8 270,196 275.9,215 283.7,225.8 289.6,228.7 294.5,226.7 297.4,230.7 300.3,234.6 302.3,222.8 305.2,209 308.2,193.5 310,186" fill="none" stroke="#8b8bf0" stroke-width="1" stroke-linejoin="round"/>
<polyline points="87.3,379.8 91.5,388 95.7,393.3 103,397.5 109.2,400.6 116.5,403.8 121.8,400.6 128,394.4 132.2,388 136.4,377.7 142.6,361 148.9,346.4 155.2,329.7 161.4,310.9 165.6,298.4 167.7,288 174,273.6 182.3,259 188.6,252.7 193.8,247.5 198,244.4 203.2,246.5 209.4,252.7 215.7,263.2 222,270.5 226.1,272 230.3,268.4 236.6,259 242.8,244.4 248,231.9 252.2,224.6 257.5,223.5 262.7,224.6 265.8,228.7 270,234.6 275.9,246.3 283.7,253.2 291.5,258 298.4,265 304.2,262 309.1,254" fill="none" stroke="#8b8bf0" stroke-width="1" stroke-linejoin="round"/>
<polyline points="87.3,414.2 91.5,419.4 93.6,423.6 100.9,421 106.1,425.7 110.3,431.5 115.5,427.8 121.8,433.6 127,427.8 130.1,425.3 133.2,432 136.4,444.5 139.5,448.7 142.2,445.5 146.8,429.9 151,417.3 153,420.5 156.2,418.4 160.4,398.5 163.5,373.5 166.6,346.4 169.8,334.9 176,329.7 180.2,317 183.3,299 184.4,290.3 189.6,289.3 193.8,284 198.6,274.7 202.1,278.8 205.3,286 209.4,294.5 213.6,302.5 216.7,323.4 226.1,319.2 230.3,329.7 236.6,339 242.8,333.8 247,317 250.1,299 252.2,282 254.3,266.3 257.5,270.5 261.6,272.6 267.9,272 273.1,275.7 278.8,281.5 284.7,279.6 291.5,287.4 297.4,294.3 304.2,302 308.2,311.9 311,311.9 317,307 322.8,301 327.7,287.4 330.7,271.8 332.6,256 334,246" fill="none" stroke="#8b8bf0" stroke-width="1" stroke-linejoin="round"/>
<polyline points="389,246 392.6,256.3 399.3,274.8 408.4,282.7 416.3,278.2 419.6,288.4 428.7,301.9 437.7,308.7 446.7,307.6 453.5,304.9 455.8,309.1 458,313.2 464.8,298.5 473.8,285 480.6,286.1 487.4,292.9 496.4,287.2 505.4,281.6 509.9,287.2 514.4,288.4 520.1,270.3 528,252.3 530.9,240.2 539.2,227.7 546,217.7" fill="none" stroke="#8b8bf0" stroke-width="1" stroke-linejoin="round"/>
<polyline points="371,246 374.5,256.8 381.3,274.8 390.3,290.6 399.3,306.4 408.4,322.2 417.4,340.3 424.2,343.7 433.2,349.3 442.2,352.7 451.2,345.9 458,348.2 462.5,344.8 471.6,336.9 480.6,323.4 487.4,318.8 494.1,322.2 503.2,326.7 511.1,329 516.7,324.5 525.7,308.7 534.8,288.4 546,268.1" fill="none" stroke="#8b8bf0" stroke-width="1" stroke-linejoin="round"/>
<polyline points="352,246 355.3,256.8 367.7,292.9 379,330.1 383.5,335.8 390.3,332.4 397.1,336.9 406.1,358.4 412.9,383.2 416.7,397.9 426.4,390 435.4,391.1 444.5,397.9 451.2,388.8 458,379.8 464.8,386.6 473.8,378.7 480.6,358.4 486.2,347.1 491.9,358.4 496.4,366.3 503.2,369.6 514.4,367.4 523.5,373 530.2,356.1 534.8,335.8 546,316.6" fill="none" stroke="#8b8bf0" stroke-width="1" stroke-linejoin="round"/>
<polyline points="895.5,385.2 900,380.8 904.4,387.4 908.8,376.3 912.2,363 915.5,336.4 918.8,314.3 923.3,296.5 927.7,278.8 932.1,258.8 935.5,241 937,233.3 940.5,225 943.5,223.4 946.3,228.6 952.2,232 958,238 967.5,240.3 972.2,247.4 978,255.6 983.9,259 991,254.4 996.8,251.6 1002.7,249.7 1005,254.4 1008.5,268.5 1012,282.6 1016.8,294.3 1022.6,304.9 1028.5,307.2 1035.5,304.2 1040.2,311.7 1045,330.5 1049.6,347 1055.5,358.7 1061.4,367 1068.4,368 1075.4,363.4 1083.7,357.5 1087.2,368 1094.2,378.6 1097.7,368 1103.6,358.7 1110.7,352.8 1115.4,354 1119,368 1123.6,371.6 1130.6,369.2 1135.3,344.6" fill="none" stroke="#8b8bf0" stroke-width="1" stroke-linejoin="round"/>
<polyline points="895.9,417.4 904,412.7 911,410.3 916.6,400 923.3,380.8 930,356.4 935.5,329.8 939.9,312 944.3,296.5 949.9,285.4 956.5,279.9 963.2,276.6 971,278.3 978.7,282 986.2,286.8 993.3,290.8 998,299 1005,309.4 1012,323.5 1021.5,340 1030.8,356.3 1040.2,375 1049.6,390.4 1059,396.2 1068.4,401 1077.8,408 1084.8,419.7 1094.2,424.4 1103.6,419.7 1110.7,415 1115.4,398.6 1119,392.7 1124.7,396.2 1131.8,395 1135.3,392.7" fill="none" stroke="#8b8bf0" stroke-width="1" stroke-linejoin="round"/>
<polyline points="895.9,449 905.3,447.4 911,459.6 918.2,469.5 924,455 931,433.8 935.8,426.8 941.3,400 945.4,371.9 948.8,349.7 953.2,334.2 958.7,323 964.3,313 966.5,315.4 971,310.9 976.5,308.7 982,309.8 991,325.8 996.8,347 1002.7,361 1009.7,358.7 1016.8,360 1023.8,372.8 1030.8,396.2 1037.9,422 1042.6,438.5 1049.6,433.8 1057.8,428 1064.9,433.8 1072,443.2 1077.8,457.3 1083.7,476 1089.5,471.4 1095.4,472.5 1101.3,476 1108.3,471.4 1113,457.3 1116.5,436.2 1120,417.4 1124.7,424.4 1129.4,426.8 1133,431.5 1135.3,440.8" fill="none" stroke="#8b8bf0" stroke-width="1" stroke-linejoin="round"/>
<path d="M87.5 654.3V657.1M94.5 654.3V656.5M96.9 654.3V652.8M99.2 654.3V652.7M101.6 654.3V652.5M111 654.3V653.7M113.3 654.3V652.1M115.7 654.3V652.1M118 654.3V647.5M120.4 654.3V644.9M132.1 654.3V651.8M134.5 654.3V644.7M136.8 654.3V636.3M139.2 654.3V634.2M153.3 654.3V645.5M155.6 654.3V643.4M165 654.3V653M167.4 654.3V652.4M176.8 654.3V656.1M186.2 654.3V654.9M209.7 654.3V671M214.4 654.3V668.7M216.7 654.3V667M219.1 654.3V664.8M223.8 654.3V649M226.1 654.3V646.7M228.5 654.3V644.6M230.8 654.3V640M233.2 654.3V636.2M259 654.3V668.7M261.4 654.3V664.7M263.7 654.3V660.9M266.1 654.3V658.8M268.4 654.3V658.8M280.2 654.3V660.4M282.5 654.3V656.6M284.9 654.3V655M299 654.3V658M301.4 654.3V651.1M303.7 654.3V643.8M306.1 654.3V639.3M308.4 654.3V635.5M329.6 654.3V653.2M331.9 654.3V650.8M334.3 654.3V648.2M360.1 654.3V665.1M367.2 654.3V665.3M369.5 654.3V665M371.9 654.3V664.4M374.2 654.3V664.2M378.9 654.3V664.1M383.6 654.3V657.4M386 654.3V653.4M388.3 654.3V652.1M390.7 654.3V651.7M418.9 654.3V655M421.2 654.3V645M423.6 654.3V639M444.7 654.3V655.5M447.1 654.3V653.6M449.4 654.3V653.4M451.8 654.3V652.4M454.1 654.3V647.8M456.5 654.3V647.4M461.2 654.3V644.1M463.5 654.3V643.1M498.8 654.3V660.1M501.1 654.3V653.6M503.5 654.3V649.9M505.8 654.3V648M508.2 654.3V647.9M515.2 654.3V650.4M517.6 654.3V649.6M519.9 654.3V648.3M522.3 654.3V646.9M524.6 654.3V646.8M527 654.3V645.9M529.3 654.3V644.1M541.1 654.3V649.8" stroke="#e81818" stroke-width="1.25" fill="none"/>
<path d="M89.8 654.3V658.2M92.2 654.3V659.5M106.3 654.3V655.2M108.6 654.3V656.4M122.7 654.3V645.2M125.1 654.3V646.2M127.4 654.3V649.2M129.8 654.3V653M141.5 654.3V636.2M143.9 654.3V639.2M146.2 654.3V644.3M148.6 654.3V649.2M150.9 654.3V650.1M158 654.3V644.8M160.3 654.3V648.4M162.7 654.3V653.7M169.7 654.3V652.9M172.1 654.3V656.7M174.4 654.3V659.2M179.1 654.3V656.4M181.5 654.3V657.7M183.8 654.3V657.9M188.5 654.3V655.1M190.9 654.3V656.6M193.2 654.3V658.3M195.6 654.3V661.2M197.9 654.3V663.8M200.3 654.3V666.4M202.6 654.3V668.7M205 654.3V670.5M207.3 654.3V672.2M212 654.3V671.4M235.5 654.3V638.6M237.9 654.3V641.7M240.2 654.3V644.9M242.6 654.3V648.5M244.9 654.3V652.9M247.3 654.3V657.6M249.6 654.3V660.8M252 654.3V664.3M254.3 654.3V667.6M256.7 654.3V669.3M270.8 654.3V659.6M273.1 654.3V660.8M275.5 654.3V661.8M277.8 654.3V663M287.2 654.3V655M289.6 654.3V656.1M291.9 654.3V657.3M294.3 654.3V658.2M296.6 654.3V659.1M310.8 654.3V636.9M313.1 654.3V640.2M315.5 654.3V643.8M317.8 654.3V647.3M320.2 654.3V650.8M322.5 654.3V652.8M327.2 654.3V655M336.6 654.3V648.7M339 654.3V650.6M341.3 654.3V652.9M343.7 654.3V655.6M346 654.3V659.4M348.4 654.3V661.9M350.7 654.3V663.7M353.1 654.3V664.4M355.4 654.3V664.9M357.8 654.3V665.1M362.5 654.3V665.3M364.8 654.3V665.5M376.6 654.3V664.3M381.3 654.3V664.6M393 654.3V652.3M395.4 654.3V652.9M397.7 654.3V653.7M402.4 654.3V655.4M404.8 654.3V656.1M407.1 654.3V656.8M409.5 654.3V657.2M411.8 654.3V657.8M414.2 654.3V658.9M416.5 654.3V659.8M425.9 654.3V639.7M428.3 654.3V641.6M430.6 654.3V643.7M433 654.3V646M435.3 654.3V649M437.7 654.3V651.7M442.4 654.3V657.3M458.8 654.3V647.6M465.9 654.3V644.7M468.2 654.3V646.4M470.6 654.3V647.8M472.9 654.3V648.4M475.3 654.3V649.1M477.6 654.3V649.2M480 654.3V651.5M484.7 654.3V656.2M487 654.3V659.6M489.4 654.3V661.6M491.7 654.3V663M494.1 654.3V664.7M496.4 654.3V665.4M510.5 654.3V648.7M512.9 654.3V650.9M531.7 654.3V644.7M534 654.3V646.8M536.4 654.3V649.7M538.7 654.3V651.1M543.4 654.3V650.9M545.8 654.3V653.3" stroke="#19e8e8" stroke-width="1.25" fill="none"/>
<polyline points="87.2,678.3 91,681 94.7,684 99.2,681.7 104.5,681 109,683.2 113.5,679.5 118,675 122.5,669.7 127,666 131.5,663 136,656.2 139.7,643.5 142.7,636 146.5,630 151,626.2 154.7,620.2 158.5,614.2 163,612 167.5,611.2 172,612.7 176.5,614.2 181,615.7 185.4,617.2 189.9,618 194.4,621.7 198.9,628.5 203.4,636.7 207.2,645 210.2,652.5 212.4,658.5 215,666 217,671.2 220,672.7 223,671.2 226,667.5 229,661.5 232,652.5 235,642.7 238,636.7 241.7,634.2 244.7,633.7 247.7,635.2 250.7,639 254.5,645 258.2,651.7 262,657 265.7,660 269.5,662.2 274,667.5 278.5,672 283,673.5 287.5,674.2 292,676.5 296.5,679.2 300.2,678.7 304,674.2 307.7,666 311.4,655.5 314.4,649.5 317.4,646.5 320.4,646.2 323.4,648 327.2,650.2 330.9,650.2 333.9,648.7 338.7,644.6 342.6,643.7 346.5,646.6 351.4,653.4 356.3,662.2 361.2,672 367,682.8 372.9,692.5 378.8,700.3 383.7,704.3 389.5,702.3 395.4,700.7 401.2,702.3 407.1,705.2 413,709.1 417.9,711.1 421.8,704.3 426.7,693.5 431.5,686.7 436.4,683.7 442.3,684.7 448.2,681.8 455,677.9 457.6,672 463.5,663.2 469.3,656.4 475.2,651.5 481.1,650.5 486.9,653.4 491.8,660.3 496.7,668.1 499.6,671 503.5,667.1 508.4,662.2 513.3,659.3 518.2,654.4 523.1,647.6 528,641.7 532.9,635.8 538.7,631.9 545.6,628" fill="none" stroke="#35d228" stroke-width="1.1" stroke-linejoin="round"/>
<polyline points="87.2,681 91,685.4 93.7,689.2 95.5,682.5 98.5,680.2 102.2,679.5 106,682.5 109,685.4 112,678.7 115.7,675 118,668.2 121,661.5 124.7,659.2 127.7,660.7 130.7,663.7 133,657 135.2,645 137.5,631.5 139.7,623.2 142.7,619.2 145,618.7 148,622.5 150.2,624.7 152.5,616.5 154.7,609 157.7,605.2 160,606.7 163,612 166.7,609 169.7,610.5 172,615 174.2,618.7 177.2,615.7 180.2,618 183.2,621 186.2,618 189.2,618.7 192.9,624 196.7,633 200.4,643.5 204.2,654 207.2,663 210.2,669 212.4,675.7 215,679.5 217.7,685.4 219.2,682.5 220.7,675 223,666.7 226,660 228.2,654 230.5,643.5 232.7,631.5 235,626.2 238,624.3 241,626.2 244,630 247,637.5 250,645 253,654 256,663 259.7,668.2 262.7,665.2 265.7,664.5 269.5,666.7 272.5,672 275.5,676.5 278.5,681 280.7,678 283.7,674.2 287.5,675 291.2,678.7 295,682.5 298,685.1 300.2,679.5 302.5,669 304.7,660 306.9,651 309.2,642 312.2,638.2 315.2,637.8 318.2,639.7 321.2,644.2 324.2,648 327.2,651 330.9,648 333.9,642.7 334.8,641.7 337.7,640.3 340.6,641.7 343.6,645.6 346.5,652.4 349.4,659.3 352.4,665.2 356.3,673 360.2,680.8 364.1,688.6 368,695.5 372.9,702.3 377.8,709.1 381.7,713.1 383.7,707.2 386.6,701.3 390.5,699.4 395.4,699.4 400.3,702.3 405.2,706.2 410,710.1 414,714 416.9,716.4 418.8,710.1 420.8,698.4 422.8,686.7 425.7,680.8 429.6,677.5 432.5,677.3 436.4,679.8 440.3,684.7 442.7,688.2 445.2,683.7 448.2,680.4 451.1,679.8 453.1,674 455,670 458.6,664.2 460.5,658.3 462.5,652.4 466.4,650.5 471.3,648.5 474.2,646.6 477.1,645.6 480.1,648 483,651.5 485.9,656.4 488.9,663.2 491.8,669.1 494.7,675.9 497.1,679.8 499.6,674 501.6,667.1 504.5,660.3 507.4,656.4 510.4,655.4 513.3,656.4 515.3,653.4 518.2,649.5 520.5,644.6 523.1,639.7 526,636.8 528,631.9 530.3,628.4 532.9,627 535.8,628.4 537.8,630.4 540.1,626.4 542.6,625.5 545.6,627" fill="none" stroke="#ffffff" stroke-width="1.1" stroke-linejoin="round"/>
<path d="M896.5 654.3V659.8M898.9 654.3V657.4M901.2 654.3V655.8M905.9 654.3V652.9M908.3 654.3V651.2M910.6 654.3V650.3M913 654.3V646.4M915.3 654.3V640.7M917.7 654.3V637.5M934.1 654.3V647.1M936.5 654.3V644.3M960 654.3V668.2M962.3 654.3V664.7M964.7 654.3V664.1M969.4 654.3V662M971.7 654.3V658.4M974.1 654.3V657.3M976.4 654.3V656.5M992.9 654.3V666.3M995.2 654.3V666.3M997.6 654.3V666.1M1002.3 654.3V664.2M1004.6 654.3V660.4M1007 654.3V657.6M1009.3 654.3V655.7M1011.7 654.3V655.4M1021.1 654.3V657.5M1039.9 654.3V660.3M1046.9 654.3V650.3M1049.3 654.3V645.3M1051.6 654.3V643M1054 654.3V642.1M1056.3 654.3V642.1M1082.1 654.3V662.5M1084.5 654.3V659.3M1086.8 654.3V650.1M1089.2 654.3V643.5M1091.5 654.3V642.4M1093.9 654.3V641.3M1096.2 654.3V639.2M1112.7 654.3V652.2M1115 654.3V651M1129.1 654.3V656.4M1131.5 654.3V650.8M1133.8 654.3V643.1" stroke="#e81818" stroke-width="1.25" fill="none"/>
<path d="M920 654.3V639.3M922.4 654.3V642.3M924.7 654.3V642.9M927.1 654.3V645.1M929.4 654.3V646.9M931.8 654.3V647.7M938.8 654.3V644.4M941.2 654.3V646.5M943.5 654.3V650.5M945.9 654.3V654.9M948.2 654.3V659.6M950.6 654.3V663.9M952.9 654.3V667.2M955.3 654.3V670M957.6 654.3V671.6M967 654.3V664.7M978.8 654.3V656.8M981.1 654.3V658.8M983.5 654.3V661.4M985.8 654.3V663.9M988.2 654.3V665.9M990.5 654.3V666.3M999.9 654.3V667M1014 654.3V656M1016.4 654.3V656.9M1018.7 654.3V657.6M1023.4 654.3V658.6M1025.8 654.3V658.9M1028.1 654.3V659.1M1030.5 654.3V659.6M1032.8 654.3V660M1035.2 654.3V660.3M1037.5 654.3V660.4M1042.2 654.3V661M1058.6 654.3V643.7M1061 654.3V646.2M1063.3 654.3V649.4M1065.7 654.3V653.3M1068 654.3V656.4M1070.4 654.3V659.5M1072.7 654.3V661.4M1075.1 654.3V662.2M1077.4 654.3V662.7M1079.8 654.3V663M1098.6 654.3V639.7M1100.9 654.3V641.2M1103.3 654.3V643.8M1105.6 654.3V646.5M1108 654.3V650.2M1110.3 654.3V653.6M1117.4 654.3V651.2M1119.7 654.3V652.3M1122.1 654.3V655.3M1124.4 654.3V657.9M1126.8 654.3V660.2" stroke="#19e8e8" stroke-width="1.25" fill="none"/>
<polyline points="896,649.5 902,649.5 908,648 914.7,640.5 920,628.5 926,616.5 932,607.5 938,599.2 942.5,595.2 947,597 951.5,604.5 956,615 960.5,624.7 965,631.5 969.5,636.7 975.5,639.7 980,644.2 984.5,650.2 989,657 993.4,666 997.9,675 1002.4,681 1008.4,683.2 1014.4,684 1020,686.9 1021.7,691.5 1027.6,698.4 1033.5,704.3 1039.3,708.6 1044.2,709.1 1049.1,705.2 1054,697.4 1059.9,689.6 1065.7,685.7 1071.6,686.7 1077.4,692.5 1082.3,697.4 1085.3,698.8 1089.2,693.5 1094.1,682.8 1099,672 1103.8,664.2 1108.7,661.2 1113.6,659.3 1118.5,657.3 1123.4,659.3 1127.3,662.2 1130.2,662.2 1133.2,659.3 1134.7,656.9" fill="none" stroke="#35d228" stroke-width="1.1" stroke-linejoin="round"/>
<polyline points="896,655.5 899,652.5 903.5,649.5 908,645 911,640.5 914,631.5 917,618 920,613.5 922.2,612 925.2,606.7 929,604.5 933.5,599.2 935.7,592.5 938,588.7 941,588.3 944,592.5 947,600 950,610.5 953,621 956,631.5 958.2,637.5 962,637.5 965,641.2 968,645.7 971.7,642 975.5,642 978.5,645 981.5,651 984.5,658.5 987.5,666 991.9,675 996.4,684 1000.9,692.2 1003.9,688.4 1008.4,684.7 1012.9,684.7 1017.4,688.4 1020,690.7 1023.7,698.4 1028.6,704.3 1033.5,710.1 1038.3,714 1042.3,715.6 1044.2,710.1 1047.1,702.3 1050.1,693.5 1053,686.7 1055.9,682.4 1058.9,680.4 1061.8,680.8 1065.7,684.7 1069.6,690.6 1074.5,697.4 1079.4,703.3 1083.7,706.6 1085.3,700.3 1087.2,690.6 1089.2,682.8 1092.1,674.9 1095,667.1 1097,660.3 1099.9,656.4 1102.9,654.4 1105.8,655.4 1108.7,658.3 1110.7,660.3 1113.6,656.4 1116.5,654.4 1119.5,655.4 1122.4,660.3 1125.3,665.2 1127.3,668.7 1129.6,663.2 1132.2,655.4 1134.1,645.6" fill="none" stroke="#ffffff" stroke-width="1.1" stroke-linejoin="round"/></svg>
<div class="abs" style="left:8px;top:130px;width:25px;height:119px;border:1px solid #f01818;color:#f01818;text-align:center;font-size:12px;padding-top:11px"><div style="height:24px;line-height:24px">频</div><div style="height:24px;line-height:24px">率</div><div style="height:24px;line-height:24px">K</div><div style="height:24px;line-height:24px">线</div></div>
<div class="abs" style="left:8px;top:250px;width:25px;height:119px;border:1px solid #fff;color:#fff;text-align:center;font-size:12px;padding-top:11px"><div style="height:24px;line-height:24px">遗</div><div style="height:24px;line-height:24px">漏</div><div style="height:24px;line-height:24px">K</div><div style="height:24px;line-height:24px">线</div></div>
<div class="abs" style="left:8px;top:370px;width:25px;height:120px;border:1px solid #fff;color:#fff;text-align:center;font-size:12px;padding-top:23px"><div style="height:24px;line-height:24px">遗</div><div style="height:24px;line-height:24px">漏</div><div style="height:24px;line-height:24px">图</div></div>
<div class="abs" style="left:8px;top:489px;width:25px;height:270px;border:1px solid #fff"></div>
<div class="abs" style="left:8px;top:130px;width:25px;height:119px;border:1px solid #e01818;box-shadow:0 0 0 1px #5a0c0c,inset 0 0 0 1px #5a0c0c"></div>
<div class="ybtn " style="left:33px;width:65px">恢复默认</div>
<div class="ybtn mono" style="left:98px;width:45px">MA</div>
<div class="ybtn mono" style="left:143px;width:45px">EMA</div>
<div class="ybtn mono r" style="left:188px;width:45px">MACD</div>
<div class="ybtn mono r" style="left:233px;width:45px">BOLL</div>
<div class="ybtn " style="left:278px;width:60px">无指标</div>
<div class="ybtn " style="left:338px;width:66px">参数设置</div>
<div class="ybtn" style="left:404px;width:483px"></div>
<div class="ybtn" style="left:887px;width:23px;"></div>
<div class="ybtn" style="left:910px;width:23px;"></div>
<div class="ybtn" style="left:933px;width:23px;"></div>
<div class="ybtn" style="left:956px;width:23px;"></div>
<div class="ybtn" style="left:979px;width:23px;"></div>
<div class="ybtn" style="left:1002px;width:24px;"></div>
<div class="ybtn" style="left:1026px;width:23px;"></div>
<div class="ybtn" style="left:1049px;width:22px;"></div>
<div class="ybtn" style="left:1071px;width:23px;"></div>
<div class="ybtn" style="left:1094px;width:50px;background:#ff0000;"></div>
<svg class="abs" style="left:885px;top:735px" width="260" height="24" viewBox="0 0 260 24">
<g><circle cx="11" cy="9.2" r="6" fill="#dfe6ee" stroke="#aab4c0" stroke-width="1.4"/><circle cx="9.5" cy="7.7" r="3.2" fill="#fff"/><path d="M15.5 14l5.5 6" stroke="#d0d0d0" stroke-width="3.2" stroke-linecap="round"/><path d="M16 14.5l5 5.5" stroke="#8a8a8a" stroke-width="1"/></g>
<path d="M28.5 9.8l7-6.3v4c5.5 0 9 3.3 8.7 12-1.7-4.4-4.2-6.5-8.7-6.5v4z" fill="#fff" stroke="#bbb" stroke-width=".6"/>
<path d="M53.5 5.5l12 12.2" stroke="#ffff33" stroke-width="3.2"/>
<path d="M73.5 5.5l13 13.2M79.2 4.6l12 12.2" stroke="#ffff33" stroke-width="3"/>
<rect x="98.7" y="6.9" width="14.2" height="9.4" fill="none" stroke="#ffff33" stroke-width="3"/>
<ellipse cx="129.2" cy="11.6" rx="7.8" ry="4.9" fill="none" stroke="#ffff33" stroke-width="3"/>
<path d="M144.3 4.8v13.4M153.9 4.8v13.4M158.7 4.8v13.4" stroke="#ffff33" stroke-width="2.7"/>
<path d="M167.8 5.4h13.4M167.8 12.1h13.4M167.8 18.4h13.4" stroke="#ffff33" stroke-width="3.2"/><path d="M164.5 22.8h21.5" stroke="#e8e8e8" stroke-width="1.2"/>
<path d="M191.7 6.4l11.5 12.4M203.2 6.4l-11.5 12.4" stroke="#ffff33" stroke-width="3.4"/>
</svg>
<div class="abs" style="left:310px;top:130px;width:184px;height:126px;background:#f1f1f1;border:1px solid #979797;box-shadow:2px 2px 3px rgba(0,0,0,.45)"><div class="abs" style="left:0;top:0;width:24px;height:124px;background:#f1f1f1;border-right:1px solid #e2e3e3"></div><div class="abs" style="left:25px;top:0;width:157px;height:124px;background:#fcfcfc"></div><div class="abs" style="left:29px;top:26px;width:152px;height:1px;background:#d7d7d7"></div><div class="abs" style="left:29px;top:98px;width:152px;height:1px;background:#d7d7d7"></div>
<div class="t" style="left:34px;top:5px">综合随机</div>
<div class="t" style="left:34px;top:33px">二星至五星交并工具</div>
<div class="t" style="left:34px;top:55px">二星至五星互转工具</div>
<div class="t" style="left:34px;top:77px">三星直组互转工具</div>
<div class="t" style="left:34px;top:105px">二星至五星组号工具</div>
</div>
<div class="abs" style="left:546px;top:126px;width:350px;height:616px;border-radius:7px 7px 1px 1px;background:linear-gradient(#e1eaf5 0px,#d6e2f1 30px,#dce6f3 120px,#dfe8f4 100%);border:1px solid #4a5566;box-shadow:inset 0 0 0 1px #f4f8fc,0 2px 8px rgba(0,0,0,.5)"></div>
<svg class="abs" style="left:555px;top:135px" width="17" height="17" viewBox="0 0 17 17"><circle cx="8.5" cy="8.5" r="8" fill="url(#ig)"/><path d="M14.4 2.6 A8 8 0 0 1 5 15.7 C9.5 15 12 12 12.8 8.5 C13.2 6.5 13.5 4.5 14.4 2.6Z" fill="url(#ib)"/><path d="M14.2 2.9 C12.5 4.5 11.8 7 11.5 9 C11 12 9.5 13.8 6.5 15 C9.8 14.6 12 12.6 12.7 9 C13.1 6.8 13.3 4.8 14.2 2.9Z" fill="#fff"/><path d="M1.8 5.7 Q5 4.8 8 8 Q9.2 7 10.8 6.8 Q9.8 8.2 9.5 10 Q5.5 10.2 3.2 8.3 Q2.2 7.2 1.8 5.7Z" fill="#fff" opacity=".95"/><path d="M4 7 Q6.5 7.2 8.3 9.2" stroke="#6cc43a" stroke-width=".7" fill="none"/></svg>
<div class="t" style="left:576px;top:137px;color:#333;text-shadow:0 0 5px #fff,0 0 6px #fff">综合随机&nbsp; 中三</div>
<div class="abs" style="left:789px;top:136px;width:30px;height:17px;border:1px solid #7b8796;border-radius:3px;background:linear-gradient(#e9f0f8 0%,#d3deec 48%,#bfcde0 52%,#cfdbe9 100%);box-shadow:inset 0 0 0 1px rgba(255,255,255,.7)"></div>
<div class="abs" style="left:822px;top:136px;width:30px;height:17px;border:1px solid #7b8796;border-radius:3px;background:linear-gradient(#e9f0f8 0%,#d3deec 48%,#bfcde0 52%,#cfdbe9 100%);box-shadow:inset 0 0 0 1px rgba(255,255,255,.7)"></div>
<div class="abs" style="left:855px;top:136px;width:30px;height:17px;border:1px solid #7b8796;border-radius:3px;background:linear-gradient(#e9f0f8 0%,#d3deec 48%,#bfcde0 52%,#cfdbe9 100%);box-shadow:inset 0 0 0 1px rgba(255,255,255,.7)"></div>
<div class="abs" style="left:798px;top:145px;width:12px;height:4px;border:1px solid #555e6b;background:#fff;border-radius:1px"></div>
<div class="abs" style="left:832px;top:140px;width:11px;height:9px;border:1px solid #555e6b;background:#fff;border-radius:1px"></div>
<div class="abs" style="left:835px;top:143px;width:5px;height:3px;border:1px solid #555e6b;background:#cfd9e6"></div>
<svg class="abs" style="left:864px;top:140px" width="12" height="10" viewBox="0 0 12 10"><path d="M1 1h2.6L6 3.3 8.4 1H11L7.6 5 11 9H8.4L6 6.7 3.6 9H1L4.4 5z" fill="#fff" stroke="#555e6b" stroke-width="1"/></svg>
<div class="abs" style="left:554px;top:156px;width:334px;height:578px;background:#2e8b57;border:1px solid #6b8f7a"></div>
<div class="abs" style="left:560px;top:162px;width:217px;height:85px;background:#fff;border:1px solid #abadb3"><div class="abs" style="right:0;top:0;width:17px;height:83px;background:#f0f0f0"></div><div class="abs" style="right:5px;top:7px;border:3.5px solid transparent;border-bottom:4px solid #808080;border-top:0"></div><div class="abs" style="right:5px;bottom:7px;border:3.5px solid transparent;border-top:4px solid #808080;border-bottom:0"></div></div>
<div class="b" style="left:788px;top:167px;width:90px;height:21px;line-height:19px">粘贴</div>
<div class="b" style="left:788px;top:198px;width:90px;height:21px;line-height:19px">清空</div>
<div class="t y" style="left:822px;top:229px">0注</div>
<div class="tab sel" style="left:558px;top:256px;width:63px;height:21px;line-height:21px;padding-left:7px">组内随机</div>
<div class="tab" style="left:621px;top:259px;width:46px;height:18px;line-height:19px">随机</div>
<div class="tab" style="left:668px;top:259px;width:44px;height:18px;line-height:19px">分割</div>
<div class="abs" style="left:558px;top:276px;width:327px;height:455px;border:1px solid #fff;border-right:2px solid #fff;border-left:3px solid #fff;border-top:2px solid #fff;box-shadow:-1px 0 0 rgba(120,140,130,.6)"></div>
<div class="abs" style="left:561px;top:278px;width:321px;height:451px;border-right:2px solid #fff;border-bottom:2px solid #fff;box-shadow:1px 1px 0 #8a9a92"></div>
<div class="t y" style="left:569px;top:289px;letter-spacing:-.15px">将全集（或指定大底）分成N组，组间号码不重复</div>
<div class="rd on" style="left:573px;top:326px"></div><div class="t" style="left:590px;top:325px">均分</div>
<div class="rd" style="left:573px;top:356px"></div><div class="t" style="left:590px;top:355px">指定</div>
<div class="b nb" style="left:644px;top:322px;width:19px;height:19px;line-height:17px">2</div>
<div class="b nb" style="left:667px;top:322px;width:19px;height:19px;line-height:17px">3</div>
<div class="b nb red" style="left:690px;top:322px;width:19px;height:19px;line-height:15px">4</div>
<div class="b nb" style="left:713px;top:322px;width:19px;height:19px;line-height:17px">5</div>
<div class="b nb" style="left:736px;top:322px;width:19px;height:19px;line-height:17px">6</div>
<div class="b nb" style="left:759px;top:322px;width:19px;height:19px;line-height:17px">7</div>
<div class="b nb" style="left:782px;top:322px;width:19px;height:19px;line-height:17px">8</div>
<div class="b nb" style="left:805px;top:322px;width:19px;height:19px;line-height:17px">9</div>
<div class="abs" style="left:642px;top:353px;width:227px;height:21px;background:#f0f0f0;border:1px solid #c9ccd1;border-radius:1px"></div>
<div class="abs" style="left:570px;top:389px;width:226px;height:158px;background:#fff;border:1px solid #000"><div class="abs" style="left:0;top:0;width:224px;height:19px;background:linear-gradient(#fff 0%,#fff 45%,#f3f4f5 55%,#e9eaeb 100%);border-bottom:1px solid #d5d5d5"></div><div class="abs" style="left:50px;top:0;width:1px;height:18px;background:#e3e4e6"></div><div class="abs" style="left:173px;top:0;width:1px;height:18px;background:#e3e4e6"></div><div class="t" style="left:8px;top:4px">序号</div><div class="t" style="left:56px;top:4px">组类A</div><div class="t" style="left:180px;top:4px">锁定</div></div>
<div class="abs" style="left:570px;top:559px;width:226px;height:159px;background:#fff;border:1px solid #000"><div class="abs" style="left:0;top:0;width:224px;height:19px;background:linear-gradient(#fff 0%,#fff 45%,#f3f4f5 55%,#e9eaeb 100%);border-bottom:1px solid #d5d5d5"></div><div class="abs" style="left:50px;top:0;width:1px;height:18px;background:#e3e4e6"></div><div class="abs" style="left:173px;top:0;width:1px;height:18px;background:#e3e4e6"></div><div class="t" style="left:8px;top:4px">序号</div><div class="t" style="left:56px;top:4px">组类B</div><div class="t" style="left:180px;top:4px">锁定</div></div>
<div class="b" style="left:804px;top:391px;width:66px;height:19px;line-height:17px">分组A</div>
<div class="b" style="left:804px;top:414px;width:66px;height:19px;line-height:17px">同屏A</div>
<div class="b" style="left:804px;top:437px;width:66px;height:19px;line-height:17px">锁定重分</div>
<div class="b" style="left:804px;top:503px;width:66px;height:19px;line-height:17px">AB交集</div>
<div class="b" style="left:804px;top:526px;width:66px;height:19px;line-height:17px">AB并集</div>
<div class="b" style="left:804px;top:561px;width:66px;height:19px;line-height:17px">分组B</div>
<div class="b" style="left:804px;top:584px;width:66px;height:19px;line-height:17px">同屏B</div>
<div class="b" style="left:804px;top:607px;width:66px;height:19px;line-height:17px">锁定重分</div>
</body></html>
